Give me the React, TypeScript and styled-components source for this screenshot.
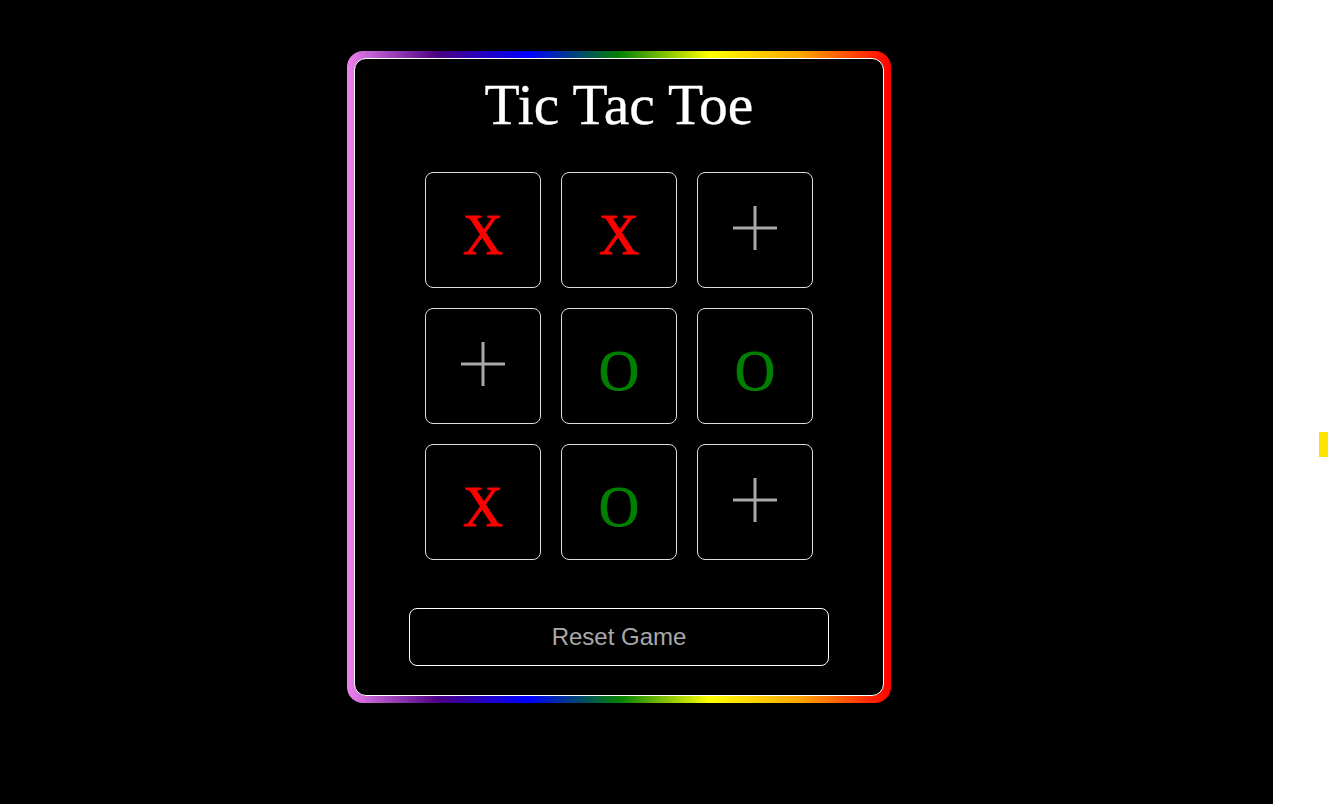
import React from "react";
import styled, { createGlobalStyle } from "styled-components";

const GlobalStyle = createGlobalStyle`
  html, body {
    margin: 0;
    padding: 0;
    background: #ffffff;
  }
  * { box-sizing: border-box; }
`;

const Page = styled.div`
  display: flex;
  width: 1328px;
  height: 804px;
  overflow: hidden;
`;

const Stage = styled.main`
  width: 1273px;
  height: 804px;
  flex: none;
  background: #000000;
  padding: 51px 0 0 347px;
`;

const Side = styled.aside`
  flex: 1;
  display: flex;
  flex-direction: column;
  align-items: flex-end;
  padding-top: 432px;
  background: #ffffff;
`;

const Marker = styled.div`
  width: 9px;
  height: 25px;
  background: #ffe400;
`;

const Frame = styled.div`
  width: 544px;
  padding: 7px;
  border-radius: 16px;
  background: linear-gradient(
    to right,
    violet,
    indigo,
    blue,
    green,
    yellow,
    orange,
    red
  );
`;

const Board = styled.section`
  display: flex;
  flex-direction: column;
  align-items: center;
  padding: 15px 0 29px;
  background: #000000;
  border: 1px solid #ffffff;
  border-radius: 12px;
`;

const Title = styled.h1`
  margin: 0;
  font-family: "Liberation Serif", "Times New Roman", serif;
  font-size: 57.5px;
  font-weight: 400;
  line-height: 62px;
  color: #ffffff;
  -webkit-text-stroke: 0.3px #ffffff;
`;

const Grid = styled.div`
  display: grid;
  grid-template-columns: repeat(3, 116px);
  grid-auto-rows: 116px;
  gap: 20px;
  margin-top: 36px;
`;

const Cell = styled.button<{ $mark: "X" | "O" | "" }>`
  display: flex;
  align-items: center;
  justify-content: center;
  padding: ${(p) => (p.$mark ? "10px 0 0" : "0 0 4px")};
  background: #000000;
  border: 1px solid #dddddd;
  border-radius: 8px;
  font-family: "Liberation Serif", "Times New Roman", serif;
  font-size: 56px;
  line-height: 62px;
  color: ${(p) => (p.$mark === "X" ? "#ff0000" : "#008000")};
  -webkit-text-stroke: 0.8px ${(p) => (p.$mark === "X" ? "#ff0000" : "#008000")};
  cursor: pointer;
`;

const ResetButton = styled.button`
  width: 420px;
  height: 58px;
  margin-top: 48px;
  background: #000000;
  border: 1px solid #ffffff;
  border-radius: 8px;
  font-family: "Liberation Sans", Arial, sans-serif;
  font-size: 24px;
  color: #a9a9a9;
  cursor: pointer;
`;

const PlusIcon = () => (
  <svg width="44" height="44" viewBox="0 0 44 44" aria-hidden="true">
    <line x1="22" y1="0" x2="22" y2="44" stroke="#a8a8a8" strokeWidth="3" />
    <line x1="0" y1="22" x2="44" y2="22" stroke="#a8a8a8" strokeWidth="3" />
  </svg>
);

const cells: ("X" | "O" | "")[] = ["X", "X", "", "", "O", "O", "X", "O", ""];

export default function App() {
  return (
    <>
      <GlobalStyle />
      <Page>
        <Stage>
          <Frame>
            <Board>
              <Title>Tic Tac Toe</Title>
              <Grid>
                {cells.map((m, i) => (
                  <Cell key={i} $mark={m}>
                    {m ? m : <PlusIcon />}
                  </Cell>
                ))}
              </Grid>
              <ResetButton>Reset Game</ResetButton>
            </Board>
          </Frame>
        </Stage>
        <Side>
          <Marker />
        </Side>
      </Page>
    </>
  );
}
